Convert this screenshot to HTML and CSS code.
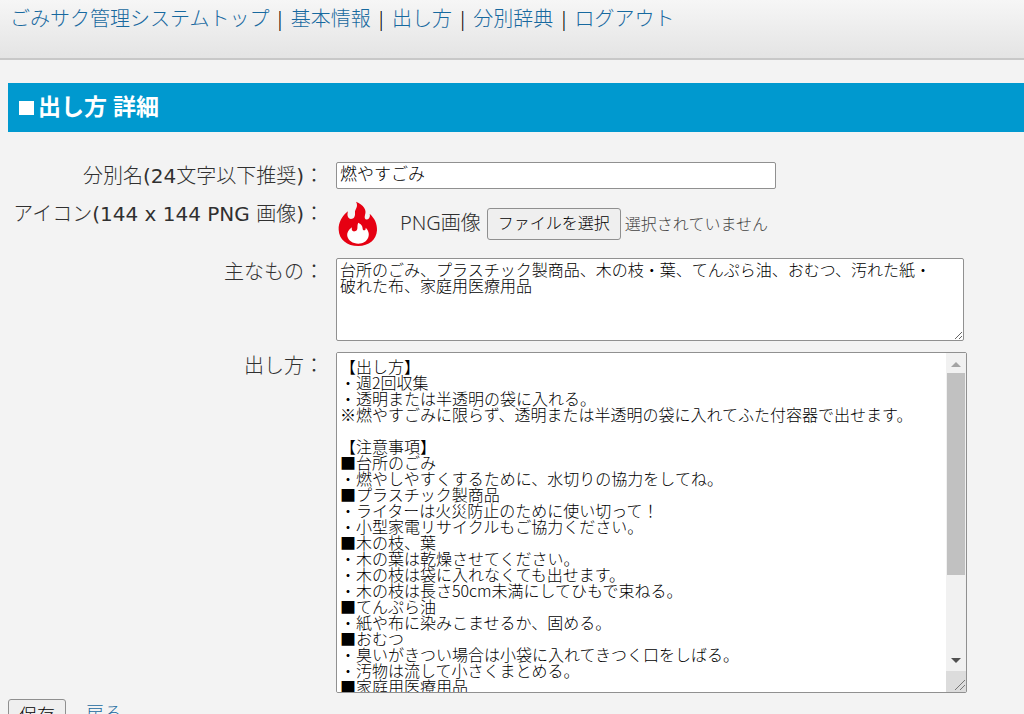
FILE: index.html
```html
<!DOCTYPE html>
<html lang="ja">
<head>
<meta charset="utf-8">
<title>出し方 詳細</title>
<link rel="stylesheet" href="styles.css">
</head>
<body>
<header class="site-header">
  <nav class="site-nav">
    <a href="#">ごみサク管理システムトップ</a> | <a href="#">基本情報</a> | <a href="#">出し方</a> | <a href="#">分別辞典</a> | <a href="#">ログアウト</a>
  </nav>
</header>
<main class="page">
  <h1 class="page-title"><span class="mark"></span>出し方 詳細</h1>
  <form class="detail-form">
    <div class="fields">
      <label class="field-label" for="name">分別名(24文字以下推奨)：</label>
      <input class="text-input" id="name" type="text" value="燃やすごみ">

      <span class="field-label">アイコン(144 x 144 PNG 画像)：</span>
      <div class="icon-row">
        <svg class="flame" viewBox="0 0 150 162" aria-hidden="true">
          <path fill="#e60012" d="M66 17C89 27 99 41 93 57C90 67 94 73 101 70C107 67 109 60 107 53C122 67 130 83 129 103C127 132 105 150 73 150C39 150 15 130 14 101C13 80 24 60 42 46C38 58 42 69 51 69C60 69 64 60 63 51C61 39 75 33 66 17Z"/>
          <path fill="#fff" d="M73 80C87 87 85 94 87 102C92 105 96 101 95 95C103 103 107 113 103 124C98 137 87 143 73 143C56 143 43 134 40 121C38 110 44 101 54 94C51 103 56 108 63 106C75 102 67 91 73 80Z"/>
        </svg>
        <label class="file-label" for="icon">PNG画像</label>
        <label class="file-picker">
          <input class="file-input" id="icon" type="file" accept="image/png">
          <span class="button file-button">ファイルを選択</span>
          <span class="file-status">選択されていません</span>
        </label>
      </div>

      <label class="field-label" for="items">主なもの：</label>
      <textarea class="text-area items" id="items">台所のごみ、プラスチック製商品、木の枝・葉、てんぷら油、おむつ、汚れた紙・破れた布、家庭用医療用品</textarea>

      <label class="field-label" for="howto">出し方：</label>
      <div class="scroll-field">
        <textarea class="text-area howto" id="howto">【出し方】
・週2回収集
・透明または半透明の袋に入れる。
※燃やすごみに限らず、透明または半透明の袋に入れてふた付容器で出せます。

【注意事項】
■台所のごみ
・燃やしやすくするために、水切りの協力をしてね。
■プラスチック製商品
・ライターは火災防止のために使い切って！
・小型家電リサイクルもご協力ください。
■木の枝、葉
・木の葉は乾燥させてください。
・木の枝は袋に入れなくても出せます。
・木の枝は長さ50cm未満にしてひもで束ねる。
■てんぷら油
・紙や布に染みこませるか、固める。
■おむつ
・臭いがきつい場合は小袋に入れてきつく口をしばる。
・汚物は流して小さくまとめる。
■家庭用医療用品</textarea>
        <div class="scrollbar" aria-hidden="true">
          <svg class="arrow" viewBox="0 0 20 20"><path fill="#a3a3a3" d="M5 14L10 9L15 14Z"/></svg>
          <div class="track"><div class="thumb"></div></div>
          <svg class="arrow" viewBox="0 0 20 20"><path fill="#505050" d="M5 7L10 12L15 7Z"/></svg>
          <svg class="grip" viewBox="0 0 20 21"><path fill="none" stroke="#777" d="M9 19L19 9M14 19L19 14"/></svg>
        </div>
      </div>
    </div>
    <div class="actions">
      <button class="button" type="submit">保存</button>
      <a href="#">戻る</a>
    </div>
  </form>
</main>
</body>
</html>
```
FILE: styles.css
```css
* { box-sizing: border-box; }
body {
  margin: 0;
  background: #f3f3f3;
  color: #404040;
  font-family: "Noto Sans", "Noto Sans CJK JP", sans-serif;
  font-size: 20px;
  font-weight: 300;
  line-height: 28px;
}
a { color: #17699f; text-decoration: none; }
input, textarea, button { font: inherit; }

.site-header {
  height: 60px;
  padding: 5px 10px;
  border-bottom: 2px solid #c8c8c8;
  background: linear-gradient(#f6f6f6, #e4e4e4);
  color: #000;
}

.page { padding: 23px 0 0 8px; }
.page-title {
  display: flex;
  align-items: center;
  gap: 4px;
  height: 49px;
  margin: 0;
  padding: 0 11px 3px;
  background: #0099cf;
  color: #fff;
  font-size: 23px;
  font-weight: 700;
}
.mark { width: 15px; height: 14px; margin-top: 3px; background: #fff; }

.detail-form { padding-top: 30px; }
.fields {
  display: grid;
  grid-template-columns: 316px 1fr;
  column-gap: 12px;
  justify-items: start;
  align-items: start;
}
.field-label {
  justify-self: end;
  color: #303030;
  font-family: "DejaVu Sans", "Noto Sans CJK JP Light", "Noto Sans CJK JP", sans-serif;
  font-weight: 400;
  line-height: 28px;
  white-space: nowrap;
}

.text-input {
  width: 440px;
  max-width: 100%;
  height: 27px;
  margin-bottom: 11px;
  padding: 0 3px 3px;
  border: 1px solid #909090;
  border-radius: 2px;
  background: #fff;
  color: #000;
  font-size: 17px;
}

.icon-row {
  display: flex;
  align-items: center;
  height: 58px;
  margin-left: -2px;
  padding-bottom: 4px;
  color: #303030;
}
.flame { width: 50px; height: 54px; margin: 0 16px 8px 0; }
.file-label { margin-right: 6px; padding-bottom: 9px; }
.file-picker {
  display: flex;
  align-items: center;
  gap: 4px;
  position: relative;
  padding-bottom: 6px;
}
.file-input { position: absolute; inset: 0; width: 100%; opacity: 0; }
.file-status { color: #444; font-size: 16px; }

.button {
  height: 32px;
  padding: 0 10px;
  border: 1px solid #8f8f8f;
  border-radius: 3px;
  background: #efefef;
  color: #000;
  font-size: 16px;
}

.text-area {
  display: block;
  max-width: 100%;
  margin: 0;
  border: 1px solid #909090;
  border-radius: 2px;
  background: #fff;
  color: #000;
  font-family: "Noto Sans CJK JP", sans-serif;
  font-size: 16px;
  line-height: 16px;
}
.items { width: 628px; height: 83px; margin-bottom: 11px; padding: 2px 24px 2px 3px; }
.howto {
  width: 631px;
  height: 341px;
  padding: 5px 24px 4px 3px;
  overflow-y: scroll;
  scrollbar-width: none;
}

.scroll-field { position: relative; max-width: 100%; }
.scrollbar {
  position: absolute;
  top: 1px;
  right: 1px;
  bottom: 1px;
  display: flex;
  flex-direction: column;
  width: 20px;
  background: #f1f1f1;
  pointer-events: none;
}
.arrow { width: 20px; height: 20px; }
.track { flex: 1; padding: 0 1px; }
.thumb { height: 202px; background: #c1c1c1; }
.grip { width: 20px; height: 21px; background: #dcdcdc; }

.actions { display: flex; gap: 20px; padding-top: 6px; }
.actions .button, .actions a { font-size: 18px; }
```
